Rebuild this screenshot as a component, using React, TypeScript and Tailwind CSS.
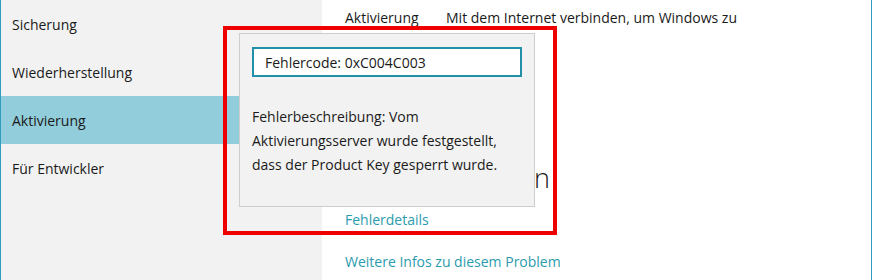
import React from 'react';

const navItems = ['Sicherung', 'Wiederherstellung', 'Aktivierung', 'Für Entwickler'];

const font = { fontFamily: '"Open Sans", "Noto Sans", sans-serif' };

export default function App() {
  return (
    <div className="relative flex h-[280px] w-[872px] overflow-hidden bg-white text-[14px] text-[#1a1a1a]" style={font}>
      <aside className="w-[322px] shrink-0 border-l border-[#2f9cc2] bg-[#f2f2f2]">
        {navItems.map((item) => (
          <div
            key={item}
            className={`flex h-12 items-center pl-[11px] ${item === 'Aktivierung' ? 'bg-[#92cddb]' : ''}`}
          >
            {item}
          </div>
        ))}
      </aside>

      <main className="flex-1 border-r border-[#2f9cc2] pl-[23px] pt-[7px]">
        <div className="flex leading-[22px]">
          <span className="w-[101px] shrink-0">Aktivierung</span>
          <span className="w-[300px]">Mit dem Internet verbinden, um Windows zu aktivieren.</span>
        </div>
        {/* heading mostly hidden behind the flyout, only its tail shows */}
        <div className="mt-[110px] flex w-[205px] justify-end">
          <h2 className="whitespace-nowrap text-[27px] font-light leading-[34px]">Windows aktivieren</h2>
        </div>
        <a className="mt-[14px] block leading-[22px] text-[#2b9bad]">Fehlerdetails</a>
        <a className="mt-[20px] block leading-[22px] text-[#2b9bad]">Weitere Infos zu diesem Problem</a>
      </main>

      {/* error flyout */}
      <div className="absolute left-[239px] top-[33px] h-[174px] w-[296px] border border-[#cdcdcd] bg-[#f2f2f2] px-[12px] pt-[13px]">
        <div className="flex h-[30px] items-center border-2 border-[#2190a8] bg-white pl-[11px]">
          Fehlercode: 0xC004C003
        </div>
        <p className="mt-[28px] leading-[24px]">
          Fehlerbeschreibung: Vom Aktivierungsserver wurde festgestellt, dass der Product Key gesperrt wurde.
        </p>
      </div>

      {/* red highlight */}
      <div className="pointer-events-none absolute left-[223px] top-[26px] h-[209px] w-[334px] border-4 border-[#ee0000]" />
    </div>
  );
}
